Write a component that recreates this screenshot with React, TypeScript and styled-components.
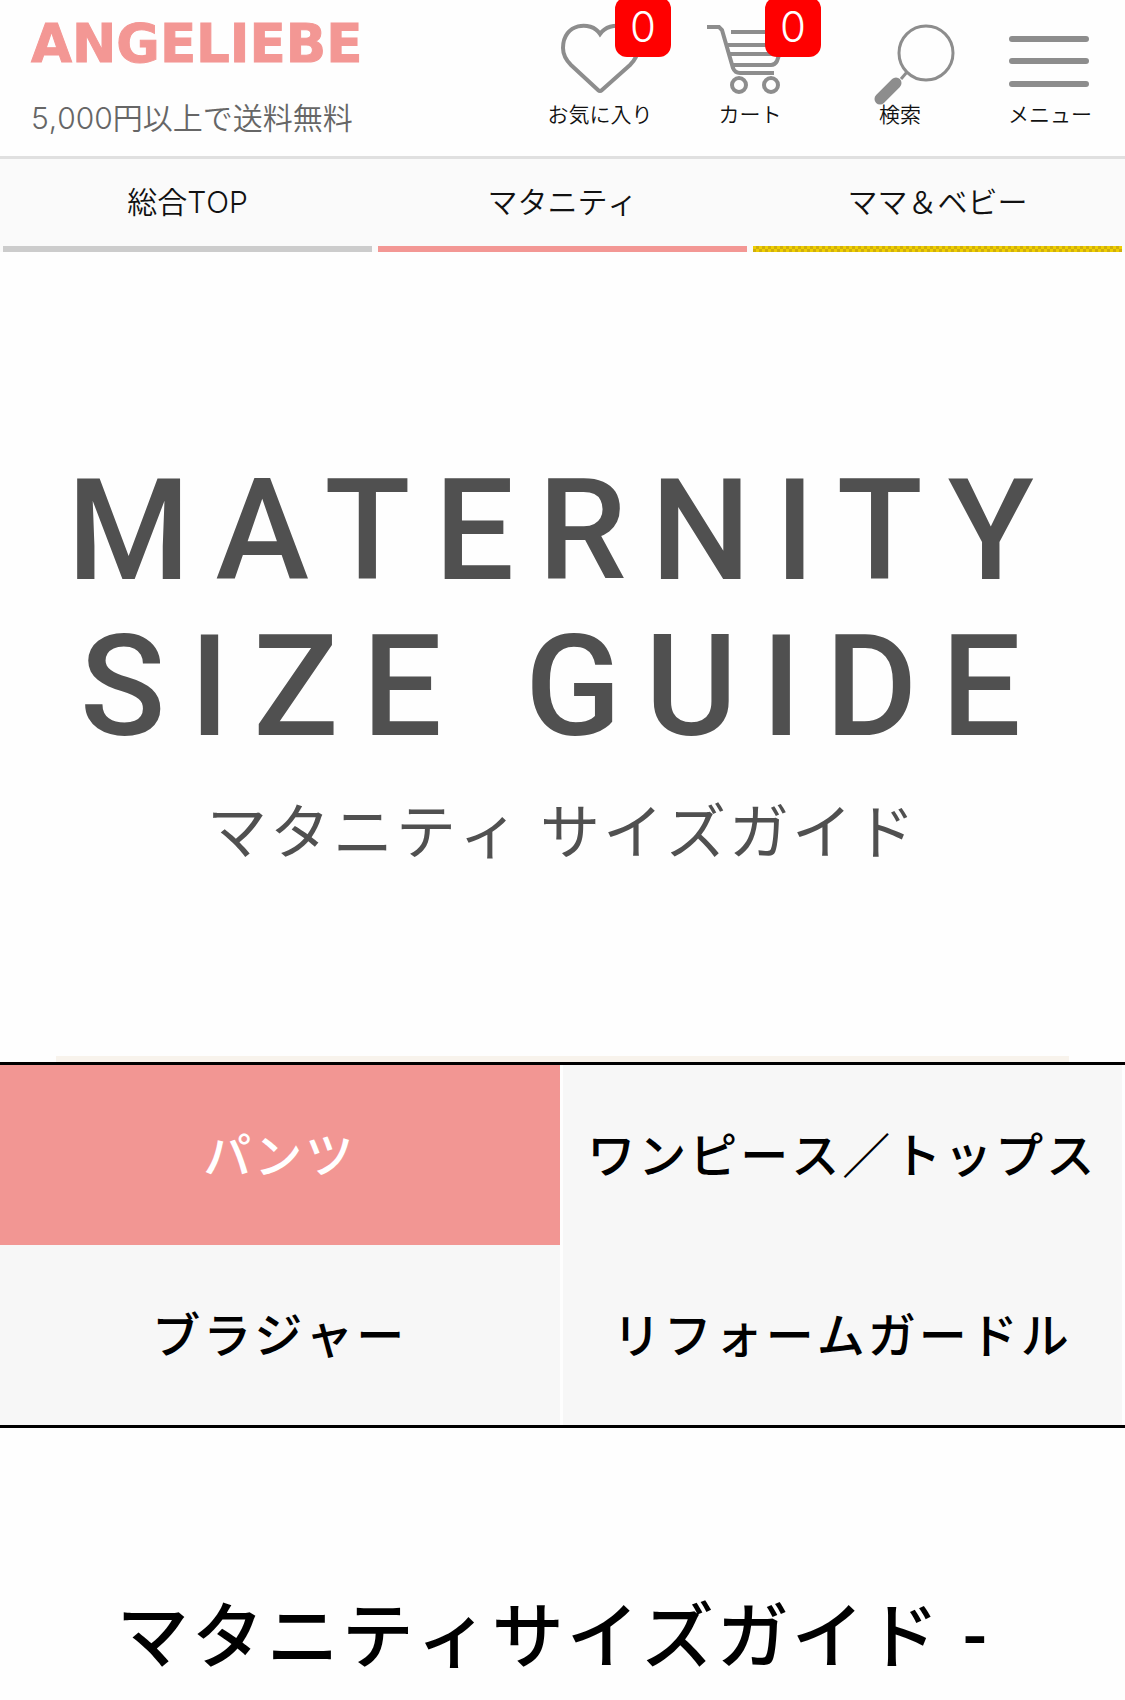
import React from "react";
import styled, { createGlobalStyle } from "styled-components";

const GlobalStyle = createGlobalStyle`
  * { box-sizing: border-box; }
  body {
    margin: 0;
    background: #fefefe;
    color: #000;
    font-family: "Roboto", "Noto Sans CJK JP", sans-serif;
    font-kerning: none;
  }
  h1, h2, p { margin: 0; }
  a { color: inherit; text-decoration: none; }
`;

const uiFont = `"Inter", "Noto Sans CJK JP", sans-serif`;

const Header = styled.header`
  display: flex;
  justify-content: space-between;
  height: 159px;
  border-bottom: 3px solid #e0e0e0;
  font-family: ${uiFont};
  font-weight: 350;
`;

const Brand = styled.div`
  padding: 19px 0 0 31px;
  white-space: nowrap;
`;

const Logo = styled.a`
  display: block;
  color: #f39794;
  font-family: "DejaVu Sans", sans-serif;
  font-size: 53px;
  line-height: 50px;
  font-weight: 700;
  -webkit-text-stroke: 1px #f39794;
`;

const Shipping = styled.p`
  margin-top: 31px;
  color: #666;
  font-size: 30px;
  line-height: 36px;
`;

const Tools = styled.nav`
  display: grid;
  grid-template-columns: repeat(4, 150px);
`;

const Tool = styled.button`
  position: relative;
  display: flex;
  flex-direction: column;
  align-items: center;
  padding: 15px 0 0;
  border: 0;
  background: none;
  color: #111;
  font: inherit;
  font-size: 21px;
  line-height: 20px;
  cursor: pointer;

  svg {
    flex: none;
    width: 90px;
    height: 90px;
    fill: none;
    stroke: #8d8d8d;
    stroke-width: 4;
    overflow: visible;
  }
`;

const Badge = styled.span`
  position: absolute;
  top: -3px;
  left: 90px;
  width: 56px;
  height: 60px;
  border-radius: 12px;
  background: #f00;
  color: #fff;
  font-size: 42px;
  line-height: 60px;
  font-weight: 300;
  text-align: center;
`;

const ShopNav = styled.nav`
  display: grid;
  grid-template-columns: repeat(3, 1fr);
  background: #fafafa;
  font-family: ${uiFont};
  font-weight: 350;
`;

const ShopLink = styled.a<{ $bar: string }>`
  display: flex;
  flex-direction: column;
  color: #111;
  font-size: 30px;
  line-height: 87px;
  text-align: center;

  &::after {
    content: "";
    height: 6px;
    margin: 0 3px;
    background: ${(p) => p.$bar};
  }
`;

const Hero = styled.section`
  display: flex;
  flex-direction: column;
  align-items: center;
  padding: 201px 0 177px;
  color: #505050;
  text-align: center;
`;

const HeroTitle = styled.h1`
  font-size: 141px;
  line-height: 156px;
  font-weight: 500;
  font-kerning: normal;
  letter-spacing: 24px;
`;

const HeroSub = styled.p`
  margin-top: 24px;
  font-size: 60px;
  line-height: 90px;
  letter-spacing: 3px;
`;

const Accent = styled.div`
  width: 90%;
  height: 6px;
  margin: 0 auto;
  background: #f8f3ec;
`;

const Tabs = styled.nav`
  display: grid;
  grid-template-columns: repeat(2, 1fr);
  border: solid #000;
  border-width: 3px 0;
`;

const Tab = styled.a<{ $active?: boolean }>`
  padding-top: 4px;
  border-right: 3px solid #fefefe;
  background: ${(p) => (p.$active ? "#f29693" : "#f7f7f7")};
  color: ${(p) => (p.$active ? "#fff" : "#000")};
  font-size: 48px;
  line-height: 176px;
  font-weight: 500;
  letter-spacing: 3px;
  text-align: center;
  white-space: nowrap;
`;

const SectionTitle = styled.h2`
  padding: 156px 48px 14px 30px;
  font-size: 72px;
  line-height: 108px;
  font-weight: 500;
  letter-spacing: 3px;
  text-align: center;
`;

const HeartIcon = () => (
  <svg viewBox="0 0 90 90" aria-hidden="true">
    <path d="M45 19C36 5 8 8 8 33c0 8 4 13 8 17l27 25q2 2 4 0l28-25c4-4 8-9 8-17C83 8 55 5 45 19z" />
  </svg>
);

const CartIcon = () => (
  <svg viewBox="0 0 90 90" aria-hidden="true">
    <path d="M2 12h12l3 3 11 38q2 5 7 5h34" />
    <path d="M26 17h51M23 30h52M25 39h47M28 50h38q4 0 6-4l7-20" />
    <circle cx="34" cy="70" r="7" />
    <circle cx="66" cy="70" r="7" />
  </svg>
);

const SearchIcon = () => (
  <svg viewBox="0 0 90 90" aria-hidden="true">
    <circle cx="71" cy="38" r="27" strokeWidth="3" />
    <path d="M52 57l-6 7" strokeWidth="3" />
    <path d="M41 68L25 84" strokeWidth="11" strokeLinecap="round" />
  </svg>
);

const MenuIcon = () => (
  <svg viewBox="0 0 90 90" aria-hidden="true">
    <path d="M7 24h74M7 46h74M7 69h74" strokeWidth="6" strokeLinecap="round" />
  </svg>
);

const tools = [
  { label: "お気に入り", Icon: HeartIcon, count: 0 },
  { label: "カート", Icon: CartIcon, count: 0 },
  { label: "検索", Icon: SearchIcon },
  { label: "メニュー", Icon: MenuIcon },
];

const shops = [
  { label: "総合TOP", bar: "#ccc" },
  { label: "マタニティ", bar: "#f39794" },
  { label: "ママ＆ベビー", bar: "repeating-conic-gradient(#d0ae0c 0 25%, #efcf00 0 50%) 0 0 / 6px 6px" },
];

const categories = ["パンツ", "ワンピース／トップス", "ブラジャー", "リフォームガードル"];

export default function App() {
  return (
    <>
      <GlobalStyle />
      <Header>
        <Brand>
          <Logo href="#">ANGELIEBE</Logo>
          <Shipping>5,000円以上で送料無料</Shipping>
        </Brand>
        <Tools>
          {tools.map(({ label, Icon, count }) => (
            <Tool key={label} type="button">
              <Icon />
              {label}
              {count !== undefined && <Badge>{count}</Badge>}
            </Tool>
          ))}
        </Tools>
      </Header>
      <ShopNav>
        {shops.map((s) => (
          <ShopLink key={s.label} href="#" $bar={s.bar}>
            {s.label}
          </ShopLink>
        ))}
      </ShopNav>
      <main>
        <Hero>
          <HeroTitle>
            MATERNITY
            <br />
            SIZE GUIDE
          </HeroTitle>
          <HeroSub>マタニティ サイズガイド</HeroSub>
        </Hero>
        <Accent />
        <Tabs>
          {categories.map((c, i) => (
            <Tab key={c} href="#" $active={i === 0}>
              {c}
            </Tab>
          ))}
        </Tabs>
        <SectionTitle>マタニティサイズガイド -</SectionTitle>
      </main>
    </>
  );
}
